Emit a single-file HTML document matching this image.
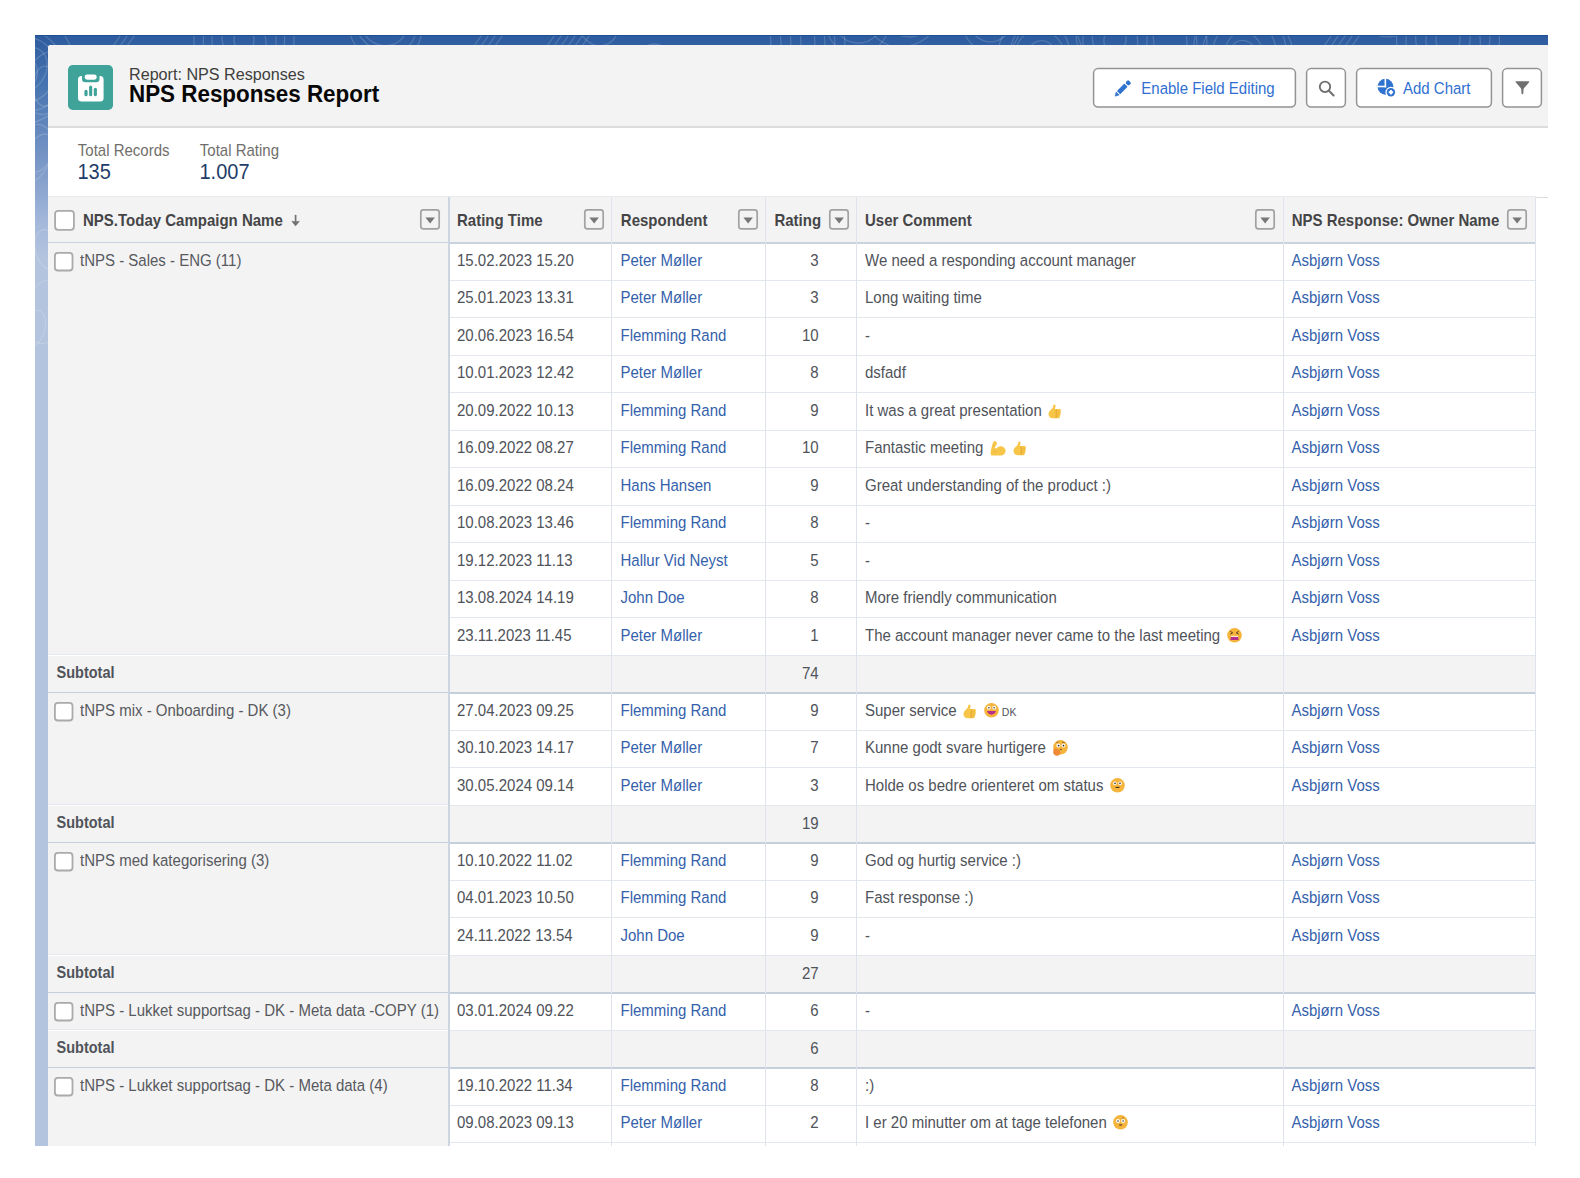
<!DOCTYPE html>
<html><head><meta charset="utf-8">
<style>
*{box-sizing:border-box;margin:0;padding:0}
html,body{width:1580px;height:1178px;overflow:hidden;background:#fff;font-family:"Liberation Sans",sans-serif;color:#3e3e3c}
#bg{position:absolute;left:35px;top:35px;width:1513px;height:1111px;background:linear-gradient(to bottom,#2c5b9e 0px,#4a76b2 55px,#7896c6 125px,#a5b9db 190px,#b3c4de 225px,#b3c4de 100%);overflow:hidden}
#card{position:absolute;left:48px;top:44.6px;width:1500px;height:1101.4px;background:#fff;border-radius:3px 0 0 0;overflow:hidden}
#hdr{position:absolute;left:0;top:0;width:1500px;height:83px;background:#f3f3f3;border-bottom:2px solid #dcdcdc}
.icon{position:absolute;left:20.3px;top:20.5px;width:45.2px;height:45.4px;background:#3fa39a;border-radius:4.8px}
.sub1{position:absolute;left:81px;top:20.4px;font-size:16.15px;color:#3e3e3c;white-space:nowrap}
.ttl{position:absolute;left:81px;top:37.4px;font-size:22.4px;line-height:26px;font-weight:bold;color:#080707;white-space:nowrap;transform:scaleY(1.08);transform-origin:0 20.76px}
.btn{position:absolute;top:23.4px;height:39.6px}
.btxt{position:absolute;top:12.2px;font-size:15px;line-height:17px;color:#2f6fd1;white-space:nowrap;transform:scaleY(1.1);transform-origin:0 13.7px}
.stat{position:absolute;font-size:15px;color:#706e6b;white-space:nowrap;transform:scaleY(1.06);transform-origin:0 14px}
.statv{position:absolute;font-size:20px;color:#1f3d68;white-space:nowrap;transform:scaleY(1.06);transform-origin:0 18.5px}
.abs{position:absolute}
#tbl{position:absolute;left:0;top:0;width:1580px;height:1146px;overflow:hidden}
.thead{position:absolute;left:48px;top:196px;width:1487.8px;height:48px;background:#f3f3f3;border-top:1px solid #e8ebf0;border-bottom:2px solid #c9d1dc}
.th{position:absolute;top:211.8px;font-size:15px;font-weight:bold;color:#454547;white-space:nowrap;line-height:17px;transform:scaleY(1.1);transform-origin:0 13.7px}
.dd{position:absolute;width:20.2px;height:20.4px;border:1.6px solid #9a9a9a;border-radius:3.5px;background:#f3f3f3}
.dd i{position:absolute;left:3.5px;top:6.1px;width:0;height:0;border-left:4.8px solid transparent;border-right:4.8px solid transparent;border-top:6.2px solid #767676}
.cb{position:absolute;left:6px;width:20px;height:20px;border:1.8px solid #ababab;border-radius:3px;background:#fff}
.rowline{position:absolute;left:448.5px;width:1086.8px;height:1px;background:#e3e7ee}
.gcell{position:absolute;left:48px;width:400.5px;background:#f3f3f3;border-bottom:1px solid #e3e7ee}
.gtx{position:absolute;left:32px;top:8.6px;font-size:15px;color:#57595e;white-space:nowrap;line-height:17px;transform:scaleY(1.1);transform-origin:0 13.7px}
.subrow{position:absolute;left:48px;width:1487.3px;height:38.5px;background:#f3f3f3;border-bottom:2px solid #c5cfdb}
.colline{position:absolute;top:197px;width:1.2px;height:949px;background:#dfe4ec}
.tx{position:absolute;font-size:15px;color:#50535a;white-space:nowrap;line-height:17px;transform:scaleY(1.1);transform-origin:0 13.7px}
.tx.b{font-weight:bold}
.lnk{color:#3461ab}
.num{text-align:right}
.em{display:inline-block;vertical-align:-1.8px;overflow:visible;margin-left:2.5px;margin-right:0.5px;height:13.6px}
.em.h{vertical-align:-2.4px}
.dk{font-size:10.5px;margin-left:2.6px;letter-spacing:0.2px}
</style></head><body>
<div id="bg"><svg width="1513" height="1111" style="position:absolute;left:0;top:0" fill="none" stroke="rgba(255,255,255,0.16)" stroke-width="1.3"><ellipse cx="-10" cy="35" rx="12" ry="16" transform="rotate(-16 -10 35)"/><ellipse cx="-10" cy="35" rx="20" ry="25" transform="rotate(40 -10 35)"/><ellipse cx="-10" cy="35" rx="31" ry="33" transform="rotate(17 -10 35)"/><ellipse cx="-10" cy="35" rx="39" ry="42" transform="rotate(-35 -10 35)"/><ellipse cx="-10" cy="35" rx="49" ry="54" transform="rotate(17 -10 35)"/><path d="M76 14 L90 -6"/><path d="M83 14 L97 -6"/><path d="M90 14 L104 -6"/><ellipse cx="152" cy="-30" rx="11" ry="13" transform="rotate(-37 152 -30)"/><ellipse cx="152" cy="-30" rx="23" ry="24" transform="rotate(35 152 -30)"/><ellipse cx="209" cy="5" rx="10" ry="12" transform="rotate(-5 209 5)"/><ellipse cx="209" cy="5" rx="21" ry="25" transform="rotate(-30 209 5)"/><ellipse cx="209" cy="5" rx="32" ry="34" transform="rotate(-11 209 5)"/><ellipse cx="209" cy="5" rx="40" ry="42" transform="rotate(32 209 5)"/><ellipse cx="209" cy="5" rx="50" ry="54" transform="rotate(-3 209 5)"/><ellipse cx="278" cy="-30" rx="11" ry="17" transform="rotate(-34 278 -30)"/><ellipse cx="278" cy="-30" rx="21" ry="27" transform="rotate(10 278 -30)"/><ellipse cx="349" cy="-15" rx="12" ry="14" transform="rotate(-39 349 -15)"/><ellipse cx="349" cy="-15" rx="24" ry="26" transform="rotate(-25 349 -15)"/><ellipse cx="349" cy="-15" rx="29" ry="36" transform="rotate(-39 349 -15)"/><ellipse cx="349" cy="-15" rx="37" ry="46" transform="rotate(-18 349 -15)"/><path d="M437 14 L451 -6"/><path d="M444 14 L458 -6"/><path d="M451 14 L465 -6"/><path d="M458 14 L472 -6"/><path d="M510 14 L524 -6"/><path d="M517 14 L531 -6"/><path d="M524 14 L538 -6"/><path d="M531 14 L545 -6"/><path d="M538 14 L552 -6"/><path d="M545 14 L559 -6"/><ellipse cx="563" cy="-15" rx="11" ry="17" transform="rotate(35 563 -15)"/><ellipse cx="563" cy="-15" rx="21" ry="26" transform="rotate(-14 563 -15)"/><ellipse cx="619" cy="35" rx="10" ry="13" transform="rotate(16 619 35)"/><ellipse cx="619" cy="35" rx="20" ry="26" transform="rotate(2 619 35)"/><ellipse cx="682" cy="-30" rx="11" ry="15" transform="rotate(-39 682 -30)"/><ellipse cx="682" cy="-30" rx="22" ry="24" transform="rotate(18 682 -30)"/><path d="M735 14 C738 6 733 2 737 -6"/><path d="M745 14 C748 6 743 2 747 -6"/><path d="M755 14 C758 6 753 2 757 -6"/><path d="M765 14 C768 6 763 2 767 -6"/><path d="M779 14 C782 6 777 2 781 -6"/><path d="M789 14 C792 6 787 2 791 -6"/><path d="M799 14 C802 6 797 2 801 -6"/><path d="M809 14 C812 6 807 2 811 -6"/><ellipse cx="823" cy="-15" rx="14" ry="13" transform="rotate(40 823 -15)"/><ellipse cx="823" cy="-15" rx="24" ry="23" transform="rotate(9 823 -15)"/><ellipse cx="823" cy="-15" rx="32" ry="35" transform="rotate(13 823 -15)"/><ellipse cx="871" cy="-30" rx="11" ry="16" transform="rotate(-8 871 -30)"/><ellipse cx="871" cy="-30" rx="21" ry="27" transform="rotate(22 871 -30)"/><ellipse cx="871" cy="-30" rx="29" ry="33" transform="rotate(-32 871 -30)"/><ellipse cx="871" cy="-30" rx="38" ry="44" transform="rotate(38 871 -30)"/><ellipse cx="955" cy="-15" rx="14" ry="12" transform="rotate(12 955 -15)"/><ellipse cx="955" cy="-15" rx="21" ry="22" transform="rotate(-18 955 -15)"/><ellipse cx="955" cy="-15" rx="29" ry="35" transform="rotate(-24 955 -15)"/><ellipse cx="1005" cy="20" rx="13" ry="15" transform="rotate(34 1005 20)"/><ellipse cx="1005" cy="20" rx="24" ry="25" transform="rotate(-38 1005 20)"/><ellipse cx="1005" cy="20" rx="30" ry="34" transform="rotate(-1 1005 20)"/><ellipse cx="1005" cy="20" rx="42" ry="42" transform="rotate(-31 1005 20)"/><ellipse cx="1080" cy="5" rx="11" ry="12" transform="rotate(17 1080 5)"/><ellipse cx="1080" cy="5" rx="22" ry="26" transform="rotate(-24 1080 5)"/><ellipse cx="1080" cy="5" rx="32" ry="37" transform="rotate(5 1080 5)"/><ellipse cx="1080" cy="5" rx="37" ry="44" transform="rotate(-31 1080 5)"/><path d="M1151 14 C1154 6 1149 2 1153 -6"/><path d="M1161 14 C1164 6 1159 2 1163 -6"/><path d="M1171 14 C1174 6 1169 2 1173 -6"/><ellipse cx="1209" cy="20" rx="13" ry="15" transform="rotate(-30 1209 20)"/><ellipse cx="1209" cy="20" rx="19" ry="23" transform="rotate(-8 1209 20)"/><ellipse cx="1209" cy="20" rx="32" ry="36" transform="rotate(9 1209 20)"/><ellipse cx="1209" cy="20" rx="42" ry="45" transform="rotate(18 1209 20)"/><ellipse cx="1209" cy="20" rx="48" ry="56" transform="rotate(-30 1209 20)"/><path d="M1287 14 L1301 -6"/><path d="M1294 14 L1308 -6"/><path d="M1301 14 L1315 -6"/><path d="M1308 14 L1322 -6"/><path d="M1315 14 L1329 -6"/><ellipse cx="1356" cy="-30" rx="15" ry="13" transform="rotate(38 1356 -30)"/><ellipse cx="1356" cy="-30" rx="22" ry="24" transform="rotate(-39 1356 -30)"/><ellipse cx="1356" cy="-30" rx="30" ry="33" transform="rotate(38 1356 -30)"/><ellipse cx="1413" cy="5" rx="12" ry="13" transform="rotate(11 1413 5)"/><ellipse cx="1413" cy="5" rx="22" ry="23" transform="rotate(15 1413 5)"/><ellipse cx="1413" cy="5" rx="32" ry="36" transform="rotate(-15 1413 5)"/><ellipse cx="1413" cy="5" rx="41" ry="44" transform="rotate(34 1413 5)"/><ellipse cx="1413" cy="5" rx="51" ry="53" transform="rotate(-23 1413 5)"/><ellipse cx="1489" cy="-30" rx="15" ry="13" transform="rotate(-19 1489 -30)"/><ellipse cx="1489" cy="-30" rx="20" ry="24" transform="rotate(-13 1489 -30)"/><ellipse cx="10" cy="51" rx="12" ry="20" transform="rotate(1 0 50)"/><ellipse cx="11" cy="45" rx="21" ry="32" transform="rotate(15 0 50)"/><ellipse cx="0" cy="117" rx="12" ry="20" transform="rotate(23 0 130)"/><ellipse cx="-9" cy="123" rx="21" ry="32" transform="rotate(25 0 130)"/><ellipse cx="11" cy="217" rx="12" ry="20" transform="rotate(-13 0 210)"/><ellipse cx="-1" cy="295" rx="12" ry="20" transform="rotate(20 0 290)"/><ellipse cx="8" cy="275" rx="21" ry="32" transform="rotate(11 0 290)"/></svg><div style="position:absolute;left:0;top:0;width:1513px;height:1px;background:#1f4f94"></div></div>
<div id="card">
  <div id="hdr">
    <div class="icon"><svg width="46" height="46" viewBox="0 0 46 46">
      <rect x="10" y="11" width="25.6" height="25.6" rx="3.5" fill="#fff"/>
      <rect x="14" y="8.3" width="17.5" height="9" rx="3.3" fill="#3fa39a"/>
      <rect x="16.7" y="9.5" width="12" height="5.2" rx="2.4" fill="#fff"/>
      <rect x="16.4" y="24.8" width="3.2" height="6.5" rx="1.6" fill="#3fa39a"/>
      <rect x="21.1" y="20.6" width="3.1" height="10.7" rx="1.55" fill="#3fa39a"/>
      <rect x="25.8" y="22.7" width="3.1" height="8.6" rx="1.55" fill="#3fa39a"/>
    </svg></div>
    <div class="sub1">Report: NPS Responses</div>
    <div class="ttl">NPS Responses Report</div>
    <div class="btn" style="left:1045.0px;width:203.0px"><svg class="abs" style="left:-1px;top:-1px" width="205.0" height="42" viewBox="0 0 205.0 42"><rect x="1.6" y="1.6" width="201.8" height="38.4" rx="4.5" fill="#fff" stroke="#939393" stroke-width="1.5"/></svg>
      <svg class="abs" style="left:20px;top:11px" width="24" height="24" viewBox="0 0 24 24"><g transform="translate(1.9 17.3) rotate(-45)" fill="#2f72d0"><path d="M0.2 0L4 -2.2V2.2Z" stroke="#2f72d0" stroke-width="0.5" stroke-linejoin="round"/><rect x="5.2" y="-2.3" width="10.5" height="4.6" rx="0.7"/><rect x="16.9" y="-2.3" width="4.1" height="4.6" rx="1.3"/></g></svg>
      <div class="btxt" style="left:48.3px">Enable Field Editing</div>
    </div>
    <div class="btn" style="left:1258.0px;width:40.0px"><svg class="abs" style="left:-1px;top:-1px" width="42.0" height="42" viewBox="0 0 42.0 42"><rect x="1.6" y="1.6" width="38.8" height="38.4" rx="4.5" fill="#fff" stroke="#939393" stroke-width="1.5"/></svg>
      <svg class="abs" style="left:11px;top:11px" width="19" height="19" viewBox="0 0 19 19"><circle cx="8" cy="7.8" r="5.2" stroke="#707070" stroke-width="1.9" fill="none"/><path d="M11.9 11.7l4.7 4.8" stroke="#707070" stroke-width="2" stroke-linecap="round"/></svg>
    </div>
    <div class="btn" style="left:1308.0px;width:136.0px"><svg class="abs" style="left:-1px;top:-1px" width="138.0" height="42" viewBox="0 0 138.0 42"><rect x="1.6" y="1.6" width="134.8" height="38.4" rx="4.5" fill="#fff" stroke="#939393" stroke-width="1.5"/></svg>
      <svg class="abs" style="left:14px;top:6px" width="30" height="28" viewBox="0 0 30 28"><circle cx="15.45" cy="12.75" r="7.9" fill="#2f72d0"/><rect x="14.55" y="3.5" width="1.6" height="9.8" fill="#fff"/><rect x="6.5" y="11.7" width="9.65" height="1.6" fill="#fff"/><circle cx="20.9" cy="18.3" r="5.5" fill="#fff"/><circle cx="20.9" cy="18.3" r="4.2" fill="#2f72d0"/><path d="M20.9 16.1v4.4M18.7 18.3h4.4" stroke="#fff" stroke-width="1.9"/></svg>
      <div class="btxt" style="left:47px">Add Chart</div>
    </div>
    <div class="btn" style="left:1454.0px;width:40.0px"><svg class="abs" style="left:-1px;top:-1px" width="42.0" height="42" viewBox="0 0 42.0 42"><rect x="1.6" y="1.6" width="38.8" height="38.4" rx="4.5" fill="#fff" stroke="#939393" stroke-width="1.5"/></svg>
      <svg class="abs" style="left:12.5px;top:12px" width="17" height="17" viewBox="0 0 17 17"><path transform="translate(-0.7 0)" d="M1.3 1.3H14.9Q15 2.1 14.4 2.8L9.6 8.3Q9.2 8.9 9.2 9.8L9 13.6Q8.1 15.2 7.2 13.6L7 9.8Q7 8.9 6.6 8.3L1.8 2.8Q1.2 2.1 1.3 1.3Z" fill="#707070"/></svg>
    </div>
  </div>
  <div class="stat" style="left:29.8px;top:97.4px">Total Records</div>
  <div class="stat" style="left:151.8px;top:97.4px">Total Rating</div>
  <div class="statv" style="left:29.5px;top:116.6px">135</div>
  <div class="statv" style="left:151.5px;top:116.6px">1.007</div>
</div>
<div id="tbl">
  <div class="abs" style="left:1535px;top:196.8px;width:13px;height:1.3px;background:#dcdcdc"></div>
  <div class="thead"></div>
  <div class="rowline" style="top:279.50px"></div>
<div class="tx" style="left:457.0px;top:251.60px">15.02.2023 15.20</div>
<div class="tx lnk" style="left:620.5px;top:251.60px">Peter Møller</div>
<div class="tx num" style="right:761.4px;top:251.60px">3</div>
<div class="tx" style="left:865.0px;top:251.60px">We need a responding account manager</div>
<div class="tx lnk" style="left:1291.4px;top:251.60px">Asbjørn Voss</div>
<div class="rowline" style="top:317.00px"></div>
<div class="tx" style="left:457.0px;top:289.10px">25.01.2023 13.31</div>
<div class="tx lnk" style="left:620.5px;top:289.10px">Peter Møller</div>
<div class="tx num" style="right:761.4px;top:289.10px">3</div>
<div class="tx" style="left:865.0px;top:289.10px">Long waiting time</div>
<div class="tx lnk" style="left:1291.4px;top:289.10px">Asbjørn Voss</div>
<div class="rowline" style="top:354.50px"></div>
<div class="tx" style="left:457.0px;top:326.60px">20.06.2023 16.54</div>
<div class="tx lnk" style="left:620.5px;top:326.60px">Flemming Rand</div>
<div class="tx num" style="right:761.4px;top:326.60px">10</div>
<div class="tx" style="left:865.0px;top:326.60px">-</div>
<div class="tx lnk" style="left:1291.4px;top:326.60px">Asbjørn Voss</div>
<div class="rowline" style="top:392.00px"></div>
<div class="tx" style="left:457.0px;top:364.10px">10.01.2023 12.42</div>
<div class="tx lnk" style="left:620.5px;top:364.10px">Peter Møller</div>
<div class="tx num" style="right:761.4px;top:364.10px">8</div>
<div class="tx" style="left:865.0px;top:364.10px">dsfadf</div>
<div class="tx lnk" style="left:1291.4px;top:364.10px">Asbjørn Voss</div>
<div class="rowline" style="top:429.50px"></div>
<div class="tx" style="left:457.0px;top:401.60px">20.09.2022 10.13</div>
<div class="tx lnk" style="left:620.5px;top:401.60px">Flemming Rand</div>
<div class="tx num" style="right:761.4px;top:401.60px">9</div>
<div class="tx" style="left:865.0px;top:401.60px">It was a great presentation <svg class="em h" width="13" height="15" viewBox="0 0 13 15" preserveAspectRatio="none"><path d="M6.2 0.6c1.1 0 1.6 0.9 1.3 2.1L6.9 5.2h4.4c1 0 1.6 0.7 1.6 1.5 0 0.5-0.2 0.8-0.5 1.1 0.3 0.3 0.5 0.6 0.5 1.1 0 0.5-0.3 0.9-0.7 1.1 0.2 0.3 0.3 0.6 0.3 0.9 0 0.6-0.4 1.1-1 1.2 0.2 0.2 0.3 0.5 0.3 0.8 0 0.9-0.7 1.5-1.6 1.5H5.2C2.3 14.4 0.5 12.8 0.5 10.1c0-2.3 1.4-3.5 2.8-4.7C4.5 4.3 5.2 3 5.3 1.6 5.4 1 5.7 0.6 6.2 0.6z" fill="#f7c548"/><path d="M8.2 5.6v8.6" stroke="#e0a32c" stroke-width="0.9"/><path d="M8.6 7.7h3.6M8.6 9.8h3.4M8.6 11.9h2.8" stroke="#e8b33a" stroke-width="0.7"/></svg></div>
<div class="tx lnk" style="left:1291.4px;top:401.60px">Asbjørn Voss</div>
<div class="rowline" style="top:467.00px"></div>
<div class="tx" style="left:457.0px;top:439.10px">16.09.2022 08.27</div>
<div class="tx lnk" style="left:620.5px;top:439.10px">Flemming Rand</div>
<div class="tx num" style="right:761.4px;top:439.10px">10</div>
<div class="tx" style="left:865.0px;top:439.10px">Fantastic meeting <svg class="em h" width="16" height="15" viewBox="0 0 16 15" preserveAspectRatio="none"><path d="M4.3 0.4c1.2-0.3 2.4 0.4 2.6 1.6 0.2 0.9-0.2 1.7-0.8 2.3L4.6 6.3c0.4 0.6 1 1.2 1.7 1.6 0.9-1.5 2.5-2.5 4.3-2.5 2.9 0 5 2.2 5 4.8 0 2.6-2.2 4.5-5.2 4.5H2.6C1.3 14.7 0.4 13.7 0.6 12.3 0.9 9.3 1.6 5.6 2.9 2 3.2 1.2 3.6 0.6 4.3 0.4z" fill="#f7c548"/><path d="M3.2 4.3l1.4 0.6M3.9 9.6l1.3 1.5 1.2-1.2" stroke="#dca43a" stroke-width="0.7" fill="none"/></svg> <svg class="em h" width="13" height="15" viewBox="0 0 13 15" preserveAspectRatio="none"><path d="M6.2 0.6c1.1 0 1.6 0.9 1.3 2.1L6.9 5.2h4.4c1 0 1.6 0.7 1.6 1.5 0 0.5-0.2 0.8-0.5 1.1 0.3 0.3 0.5 0.6 0.5 1.1 0 0.5-0.3 0.9-0.7 1.1 0.2 0.3 0.3 0.6 0.3 0.9 0 0.6-0.4 1.1-1 1.2 0.2 0.2 0.3 0.5 0.3 0.8 0 0.9-0.7 1.5-1.6 1.5H5.2C2.3 14.4 0.5 12.8 0.5 10.1c0-2.3 1.4-3.5 2.8-4.7C4.5 4.3 5.2 3 5.3 1.6 5.4 1 5.7 0.6 6.2 0.6z" fill="#f7c548"/><path d="M8.2 5.6v8.6" stroke="#e0a32c" stroke-width="0.9"/><path d="M8.6 7.7h3.6M8.6 9.8h3.4M8.6 11.9h2.8" stroke="#e8b33a" stroke-width="0.7"/></svg></div>
<div class="tx lnk" style="left:1291.4px;top:439.10px">Asbjørn Voss</div>
<div class="rowline" style="top:504.50px"></div>
<div class="tx" style="left:457.0px;top:476.60px">16.09.2022 08.24</div>
<div class="tx lnk" style="left:620.5px;top:476.60px">Hans Hansen</div>
<div class="tx num" style="right:761.4px;top:476.60px">9</div>
<div class="tx" style="left:865.0px;top:476.60px">Great understanding of the product :)</div>
<div class="tx lnk" style="left:1291.4px;top:476.60px">Asbjørn Voss</div>
<div class="rowline" style="top:542.00px"></div>
<div class="tx" style="left:457.0px;top:514.10px">10.08.2023 13.46</div>
<div class="tx lnk" style="left:620.5px;top:514.10px">Flemming Rand</div>
<div class="tx num" style="right:761.4px;top:514.10px">8</div>
<div class="tx" style="left:865.0px;top:514.10px">-</div>
<div class="tx lnk" style="left:1291.4px;top:514.10px">Asbjørn Voss</div>
<div class="rowline" style="top:579.50px"></div>
<div class="tx" style="left:457.0px;top:551.60px">19.12.2023 11.13</div>
<div class="tx lnk" style="left:620.5px;top:551.60px">Hallur Vid Neyst</div>
<div class="tx num" style="right:761.4px;top:551.60px">5</div>
<div class="tx" style="left:865.0px;top:551.60px">-</div>
<div class="tx lnk" style="left:1291.4px;top:551.60px">Asbjørn Voss</div>
<div class="rowline" style="top:617.00px"></div>
<div class="tx" style="left:457.0px;top:589.10px">13.08.2024 14.19</div>
<div class="tx lnk" style="left:620.5px;top:589.10px">John Doe</div>
<div class="tx num" style="right:761.4px;top:589.10px">8</div>
<div class="tx" style="left:865.0px;top:589.10px">More friendly communication</div>
<div class="tx lnk" style="left:1291.4px;top:589.10px">Asbjørn Voss</div>
<div class="rowline" style="top:654.50px"></div>
<div class="tx" style="left:457.0px;top:626.60px">23.11.2023 11.45</div>
<div class="tx lnk" style="left:620.5px;top:626.60px">Peter Møller</div>
<div class="tx num" style="right:761.4px;top:626.60px">1</div>
<div class="tx" style="left:865.0px;top:626.60px">The account manager never came to the last meeting <svg class="em" width="15" height="15" viewBox="0 0 15 15" preserveAspectRatio="none"><circle cx="7.5" cy="7.5" r="7.3" fill="#f5b53c"/><path d="M3.3 3.6l2.4 1.4-2.4 1.3M11.7 3.6l-2.4 1.4 2.4 1.3" stroke="#5b3c1e" stroke-width="1" fill="none"/><path d="M3.9 8.9h7.2l0.5 3.2H3.4z" fill="#b5308a"/><path d="M4 8.6h7" stroke="#fff" stroke-width="0.9"/></svg></div>
<div class="tx lnk" style="left:1291.4px;top:626.60px">Asbjørn Voss</div>
<div class="gcell" style="top:243px;height:411.50px"><svg class="abs" style="left:4px;top:7px" width="24" height="24" viewBox="0 0 24 24"><rect x="2.9" y="2.9" width="17.6" height="17.6" rx="3" fill="#fff" stroke="#aaa" stroke-width="1.8"/></svg><div class="gtx">tNPS - Sales - ENG (11)</div></div>
<div class="subrow" style="top:655.5px"></div>
<div class="tx b" style="left:56.5px;top:665.10px;font-size:14.5px">Subtotal</div>
<div class="tx num" style="right:761.4px;top:665.10px">74</div>
<div class="rowline" style="top:729.50px"></div>
<div class="tx" style="left:457.0px;top:701.60px">27.04.2023 09.25</div>
<div class="tx lnk" style="left:620.5px;top:701.60px">Flemming Rand</div>
<div class="tx num" style="right:761.4px;top:701.60px">9</div>
<div class="tx" style="left:865.0px;top:701.60px">Super service <svg class="em h" width="13" height="15" viewBox="0 0 13 15" preserveAspectRatio="none"><path d="M6.2 0.6c1.1 0 1.6 0.9 1.3 2.1L6.9 5.2h4.4c1 0 1.6 0.7 1.6 1.5 0 0.5-0.2 0.8-0.5 1.1 0.3 0.3 0.5 0.6 0.5 1.1 0 0.5-0.3 0.9-0.7 1.1 0.2 0.3 0.3 0.6 0.3 0.9 0 0.6-0.4 1.1-1 1.2 0.2 0.2 0.3 0.5 0.3 0.8 0 0.9-0.7 1.5-1.6 1.5H5.2C2.3 14.4 0.5 12.8 0.5 10.1c0-2.3 1.4-3.5 2.8-4.7C4.5 4.3 5.2 3 5.3 1.6 5.4 1 5.7 0.6 6.2 0.6z" fill="#f7c548"/><path d="M8.2 5.6v8.6" stroke="#e0a32c" stroke-width="0.9"/><path d="M8.6 7.7h3.6M8.6 9.8h3.4M8.6 11.9h2.8" stroke="#e8b33a" stroke-width="0.7"/></svg> <svg class="em" width="15" height="15" viewBox="0 0 15 15" preserveAspectRatio="none"><circle cx="7.5" cy="7.5" r="7.3" fill="#f5b53c"/><circle cx="4.8" cy="4.9" r="1.9" fill="#fff"/><circle cx="10.2" cy="4.9" r="1.9" fill="#fff"/><circle cx="4.9" cy="4.9" r="0.8" fill="#3b2a2a"/><circle cx="10.1" cy="4.9" r="0.8" fill="#3b2a2a"/><path d="M3.2 8.3h8.6c0 2.2-1.9 3.6-4.3 3.6S3.2 10.5 3.2 8.3z" fill="#b5308a"/></svg><span class=dk>DK</span></div>
<div class="tx lnk" style="left:1291.4px;top:701.60px">Asbjørn Voss</div>
<div class="rowline" style="top:767.00px"></div>
<div class="tx" style="left:457.0px;top:739.10px">30.10.2023 14.17</div>
<div class="tx lnk" style="left:620.5px;top:739.10px">Peter Møller</div>
<div class="tx num" style="right:761.4px;top:739.10px">7</div>
<div class="tx" style="left:865.0px;top:739.10px">Kunne godt svare hurtigere <svg class="em" width="15" height="15" viewBox="0 0 15 15" preserveAspectRatio="none"><circle cx="7.5" cy="7.5" r="7.3" fill="#f5b53c"/><circle cx="5.4" cy="5.6" r="2" fill="#fff"/><circle cx="10.4" cy="5.6" r="2" fill="#fff"/><circle cx="5.6" cy="5.8" r="0.9" fill="#3b2a2a"/><circle cx="10.5" cy="5.8" r="0.9" fill="#3b2a2a"/><path d="M3.4 2.6l2.2-0.5M9 2.4l2.6 0.3" stroke="#6a4a2a" stroke-width="0.7"/><path d="M6.6 10.2c0.6-0.8 1.8-0.8 2.4 0" stroke="#5b3c1e" stroke-width="0.9" fill="none"/><path d="M0.4 9.6c1.2-1.6 3.4-1.4 4.6-0.2l2.4 2.6c0.5 1.8-0.6 3.5-2.6 3.9-2.4 0.4-4.4-0.8-4.6-3.1z" fill="#f08a34"/></svg></div>
<div class="tx lnk" style="left:1291.4px;top:739.10px">Asbjørn Voss</div>
<div class="rowline" style="top:804.50px"></div>
<div class="tx" style="left:457.0px;top:776.60px">30.05.2024 09.14</div>
<div class="tx lnk" style="left:620.5px;top:776.60px">Peter Møller</div>
<div class="tx num" style="right:761.4px;top:776.60px">3</div>
<div class="tx" style="left:865.0px;top:776.60px">Holde os bedre orienteret om status <svg class="em" width="15" height="15" viewBox="0 0 15 15" preserveAspectRatio="none"><circle cx="7.5" cy="7.5" r="7.3" fill="#f5b53c"/><circle cx="4.9" cy="5.6" r="1.8" fill="#fff"/><circle cx="10.1" cy="5.6" r="1.8" fill="#fff"/><circle cx="5" cy="5.6" r="0.8" fill="#3b2a2a"/><circle cx="10" cy="5.6" r="0.8" fill="#3b2a2a"/><path d="M5.5 9.6h4" stroke="#4a3020" stroke-width="1.1"/></svg></div>
<div class="tx lnk" style="left:1291.4px;top:776.60px">Asbjørn Voss</div>
<div class="gcell" style="top:693.0px;height:111.50px"><svg class="abs" style="left:4px;top:7px" width="24" height="24" viewBox="0 0 24 24"><rect x="2.9" y="2.9" width="17.6" height="17.6" rx="3" fill="#fff" stroke="#aaa" stroke-width="1.8"/></svg><div class="gtx">tNPS mix - Onboarding - DK (3)</div></div>
<div class="subrow" style="top:805.5px"></div>
<div class="tx b" style="left:56.5px;top:815.10px;font-size:14.5px">Subtotal</div>
<div class="tx num" style="right:761.4px;top:815.10px">19</div>
<div class="rowline" style="top:879.50px"></div>
<div class="tx" style="left:457.0px;top:851.60px">10.10.2022 11.02</div>
<div class="tx lnk" style="left:620.5px;top:851.60px">Flemming Rand</div>
<div class="tx num" style="right:761.4px;top:851.60px">9</div>
<div class="tx" style="left:865.0px;top:851.60px">God og hurtig service :)</div>
<div class="tx lnk" style="left:1291.4px;top:851.60px">Asbjørn Voss</div>
<div class="rowline" style="top:917.00px"></div>
<div class="tx" style="left:457.0px;top:889.10px">04.01.2023 10.50</div>
<div class="tx lnk" style="left:620.5px;top:889.10px">Flemming Rand</div>
<div class="tx num" style="right:761.4px;top:889.10px">9</div>
<div class="tx" style="left:865.0px;top:889.10px">Fast response :)</div>
<div class="tx lnk" style="left:1291.4px;top:889.10px">Asbjørn Voss</div>
<div class="rowline" style="top:954.50px"></div>
<div class="tx" style="left:457.0px;top:926.60px">24.11.2022 13.54</div>
<div class="tx lnk" style="left:620.5px;top:926.60px">John Doe</div>
<div class="tx num" style="right:761.4px;top:926.60px">9</div>
<div class="tx" style="left:865.0px;top:926.60px">-</div>
<div class="tx lnk" style="left:1291.4px;top:926.60px">Asbjørn Voss</div>
<div class="gcell" style="top:843.0px;height:111.50px"><svg class="abs" style="left:4px;top:7px" width="24" height="24" viewBox="0 0 24 24"><rect x="2.9" y="2.9" width="17.6" height="17.6" rx="3" fill="#fff" stroke="#aaa" stroke-width="1.8"/></svg><div class="gtx">tNPS med kategorisering (3)</div></div>
<div class="subrow" style="top:955.5px"></div>
<div class="tx b" style="left:56.5px;top:965.10px;font-size:14.5px">Subtotal</div>
<div class="tx num" style="right:761.4px;top:965.10px">27</div>
<div class="rowline" style="top:1029.50px"></div>
<div class="tx" style="left:457.0px;top:1001.60px">03.01.2024 09.22</div>
<div class="tx lnk" style="left:620.5px;top:1001.60px">Flemming Rand</div>
<div class="tx num" style="right:761.4px;top:1001.60px">6</div>
<div class="tx" style="left:865.0px;top:1001.60px">-</div>
<div class="tx lnk" style="left:1291.4px;top:1001.60px">Asbjørn Voss</div>
<div class="gcell" style="top:993.0px;height:36.50px"><svg class="abs" style="left:4px;top:7px" width="24" height="24" viewBox="0 0 24 24"><rect x="2.9" y="2.9" width="17.6" height="17.6" rx="3" fill="#fff" stroke="#aaa" stroke-width="1.8"/></svg><div class="gtx">tNPS - Lukket supportsag - DK - Meta data -COPY (1)</div></div>
<div class="subrow" style="top:1030.5px"></div>
<div class="tx b" style="left:56.5px;top:1040.10px;font-size:14.5px">Subtotal</div>
<div class="tx num" style="right:761.4px;top:1040.10px">6</div>
<div class="rowline" style="top:1104.50px"></div>
<div class="tx" style="left:457.0px;top:1076.60px">19.10.2022 11.34</div>
<div class="tx lnk" style="left:620.5px;top:1076.60px">Flemming Rand</div>
<div class="tx num" style="right:761.4px;top:1076.60px">8</div>
<div class="tx" style="left:865.0px;top:1076.60px">:)</div>
<div class="tx lnk" style="left:1291.4px;top:1076.60px">Asbjørn Voss</div>
<div class="rowline" style="top:1142.00px"></div>
<div class="tx" style="left:457.0px;top:1114.10px">09.08.2023 09.13</div>
<div class="tx lnk" style="left:620.5px;top:1114.10px">Peter Møller</div>
<div class="tx num" style="right:761.4px;top:1114.10px">2</div>
<div class="tx" style="left:865.0px;top:1114.10px">I er 20 minutter om at tage telefonen <svg class="em" width="15" height="15" viewBox="0 0 15 15" preserveAspectRatio="none"><circle cx="7.5" cy="7.5" r="7.3" fill="#f5b53c"/><circle cx="5" cy="6.2" r="2" fill="#fff"/><circle cx="10.1" cy="6.2" r="2" fill="#fff"/><circle cx="5" cy="6.2" r="0.8" fill="#3b2a2a"/><circle cx="10.1" cy="6.2" r="0.8" fill="#3b2a2a"/><path d="M6.2 10.2h2.9" stroke="#4a3020" stroke-width="1.1"/><path d="M9.2 3.2h1.6" stroke="#6a4a2a" stroke-width="0.7"/></svg></div>
<div class="tx lnk" style="left:1291.4px;top:1114.10px">Asbjørn Voss</div>
<div class="rowline" style="top:1179.50px"></div>
<div class="gcell" style="top:1068.0px;height:111.50px"><svg class="abs" style="left:4px;top:7px" width="24" height="24" viewBox="0 0 24 24"><rect x="2.9" y="2.9" width="17.6" height="17.6" rx="3" fill="#fff" stroke="#aaa" stroke-width="1.8"/></svg><div class="gtx">tNPS - Lukket supportsag - DK - Meta data (4)</div></div>
  <div class="colline" style="left:448.0px;background:#cdd5e0;width:1.6px"></div><div class="colline" style="left:611.2px"></div><div class="colline" style="left:765.1px"></div><div class="colline" style="left:855.8px"></div><div class="colline" style="left:1282.9px"></div><div class="colline" style="left:1534.8px"></div>
  <svg class="abs" style="left:52px;top:208px" width="25" height="25" viewBox="0 0 25 25"><rect x="3.1" y="2.8" width="18.8" height="19" rx="3" fill="#fff" stroke="#aaa" stroke-width="1.8"/></svg>
  <div class="th" style="left:83px">NPS.Today Campaign Name</div><svg class="abs" style="left:290px;top:214px" width="11" height="13" viewBox="0 0 11 13"><path d="M5.6 1.6v7" stroke="#727272" stroke-width="1.7" stroke-linecap="round"/><path d="M1.9 7.3Q5.6 8.3 9.3 7.3L6 11.5Q5.6 11.9 5.2 11.5z" fill="#727272" stroke="#727272" stroke-width="0.7" stroke-linejoin="round"/></svg>
  <svg class="abs" style="left:418.20px;top:207.00px" width="24" height="24" viewBox="0 0 24 24"><rect x="2.8" y="2.8" width="18.4" height="19" rx="2.6" fill="#f3f3f3" stroke="#a2a2a2" stroke-width="1.7"/><path d="M7.4 10.4h9.5L12.15 16.4z" fill="#777"/></svg>
  <div class="th" style="left:457px">Rating Time</div>
  <svg class="abs" style="left:582.10px;top:207.00px" width="24" height="24" viewBox="0 0 24 24"><rect x="2.8" y="2.8" width="18.4" height="19" rx="2.6" fill="#f3f3f3" stroke="#a2a2a2" stroke-width="1.7"/><path d="M7.4 10.4h9.5L12.15 16.4z" fill="#777"/></svg>
  <div class="th" style="left:620.8px">Respondent</div>
  <svg class="abs" style="left:736.00px;top:207.00px" width="24" height="24" viewBox="0 0 24 24"><rect x="2.8" y="2.8" width="18.4" height="19" rx="2.6" fill="#f3f3f3" stroke="#a2a2a2" stroke-width="1.7"/><path d="M7.4 10.4h9.5L12.15 16.4z" fill="#777"/></svg>
  <div class="th" style="left:774.4px">Rating</div>
  <svg class="abs" style="left:826.80px;top:207.00px" width="24" height="24" viewBox="0 0 24 24"><rect x="2.8" y="2.8" width="18.4" height="19" rx="2.6" fill="#f3f3f3" stroke="#a2a2a2" stroke-width="1.7"/><path d="M7.4 10.4h9.5L12.15 16.4z" fill="#777"/></svg>
  <div class="th" style="left:865px">User Comment</div>
  <svg class="abs" style="left:1252.80px;top:207.00px" width="24" height="24" viewBox="0 0 24 24"><rect x="2.8" y="2.8" width="18.4" height="19" rx="2.6" fill="#f3f3f3" stroke="#a2a2a2" stroke-width="1.7"/><path d="M7.4 10.4h9.5L12.15 16.4z" fill="#777"/></svg>
  <div class="th" style="left:1291.7px">NPS Response: Owner Name</div>
  <svg class="abs" style="left:1504.70px;top:207.00px" width="24" height="24" viewBox="0 0 24 24"><rect x="2.8" y="2.8" width="18.4" height="19" rx="2.6" fill="#f3f3f3" stroke="#a2a2a2" stroke-width="1.7"/><path d="M7.4 10.4h9.5L12.15 16.4z" fill="#777"/></svg>
</div>
</body></html>
